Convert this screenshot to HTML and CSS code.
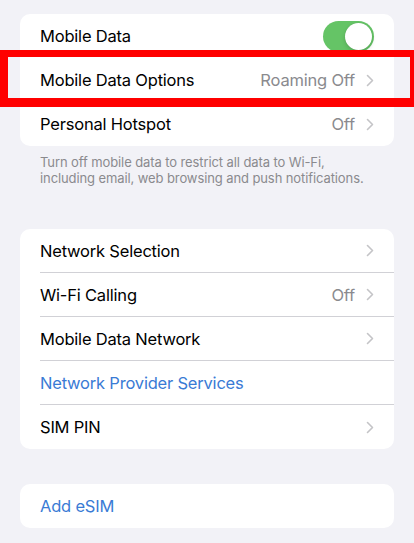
FILE: index.html
```html
<!DOCTYPE html>
<html lang="en">
<head>
<meta charset="utf-8">
<title>Mobile Data</title>
<link rel="stylesheet" href="styles.css">
</head>
<body>
<div class="page">
  <div class="group group-first">
    <div class="row">
      <div class="row-body">
        <span class="label">Mobile Data</span>
        <span class="toggle"><span class="knob"></span></span>
      </div>
    </div>
    <div class="row">
      <div class="row-body">
        <span class="label">Mobile Data Options</span>
        <span class="value">Roaming Off</span>
        <svg class="chev" viewBox="0 0 8 13" width="8" height="13"><path d="M1.5 1.5l5 5-5 5" /></svg>
      </div>
    </div>
    <div class="row">
      <div class="row-body">
        <span class="label">Personal Hotspot</span>
        <span class="value">Off</span>
        <svg class="chev" viewBox="0 0 8 13" width="8" height="13"><path d="M1.5 1.5l5 5-5 5" /></svg>
      </div>
    </div>
  </div>
  <p class="footer">Turn off mobile data to restrict all data to Wi-Fi, including email, web browsing and push notifications.</p>

  <div class="group group-second">
    <div class="row">
      <div class="row-body">
        <span class="label">Network Selection</span>
        <svg class="chev" viewBox="0 0 8 13" width="8" height="13"><path d="M1.5 1.5l5 5-5 5" /></svg>
      </div>
    </div>
    <div class="row">
      <div class="row-body">
        <span class="label">Wi-Fi Calling</span>
        <span class="value">Off</span>
        <svg class="chev" viewBox="0 0 8 13" width="8" height="13"><path d="M1.5 1.5l5 5-5 5" /></svg>
      </div>
    </div>
    <div class="row">
      <div class="row-body">
        <span class="label">Mobile Data Network</span>
        <svg class="chev" viewBox="0 0 8 13" width="8" height="13"><path d="M1.5 1.5l5 5-5 5" /></svg>
      </div>
    </div>
    <div class="row">
      <div class="row-body">
        <span class="label link">Network Provider Services</span>
      </div>
    </div>
    <div class="row">
      <div class="row-body">
        <span class="label">SIM PIN</span>
        <svg class="chev" viewBox="0 0 8 13" width="8" height="13"><path d="M1.5 1.5l5 5-5 5" /></svg>
      </div>
    </div>
  </div>

  <div class="group group-third">
    <div class="row">
      <div class="row-body">
        <span class="label link">Add eSIM</span>
      </div>
    </div>
  </div>
</div>
<div class="highlight"></div>
</body>
</html>
```

FILE: styles.css
```css
html, body {
  margin: 0;
  padding: 0;
  background: #f2f2f7;
  overflow: hidden;
}
body {
  font-family: Inter, "Liberation Sans", sans-serif;
  -webkit-font-smoothing: antialiased;
  color: #000;
  width: 414px;
  height: 543px;
  position: relative;
}
.page {
  padding: 14px 20px 0 20px;
}
.group {
  background: #fff;
  border-radius: 10px;
  overflow: hidden;
}
.group-second {
  margin-top: 43px;
}
.group-third {
  margin-top: 35px;
}
.row {
  padding-left: 20px;
}
.row-body {
  height: 44px;
  display: flex;
  align-items: center;
  padding-right: 20px;
  border-bottom: 0.5px solid #d1d1d6;
  box-sizing: border-box;
}
.row:last-child .row-body,
.group-first .row-body {
  border-bottom: none;
}
.label {
  flex: 1;
  font-size: 16.5px;
  letter-spacing: -0.2px;
}
.link {
  color: #3a7bd5;
}
.value {
  font-size: 16.5px;
  letter-spacing: -0.2px;
  color: #8a8a8e;
  margin-right: 11px;
}
.chev {
  width: 8px;
  height: 13px;
  fill: none;
  stroke: #c4c4c7;
  stroke-width: 1.6;
  stroke-linecap: round;
  stroke-linejoin: round;
}
.toggle {
  width: 51px;
  height: 31px;
  border-radius: 16px;
  background: #65c466;
  position: relative;
}
.knob {
  position: absolute;
  right: 2px;
  top: 2px;
  width: 27px;
  height: 27px;
  border-radius: 50%;
  background: #fff;
  box-shadow: 0 2px 4px rgba(0,0,0,0.15), 0 0 1px rgba(0,0,0,0.1);
}
.footer {
  margin: 0;
  padding: 8px 20px 0 20px;
  font-size: 13px;
  line-height: 16px;
  color: #8a8a8e;
  letter-spacing: -0.1px;
}
.highlight {
  position: absolute;
  left: 0;
  top: 50px;
  width: 414px;
  height: 57px;
  box-sizing: border-box;
  border-style: solid;
  border-color: #ff0000;
  border-width: 7px 4px 9px 8px;
}
```
